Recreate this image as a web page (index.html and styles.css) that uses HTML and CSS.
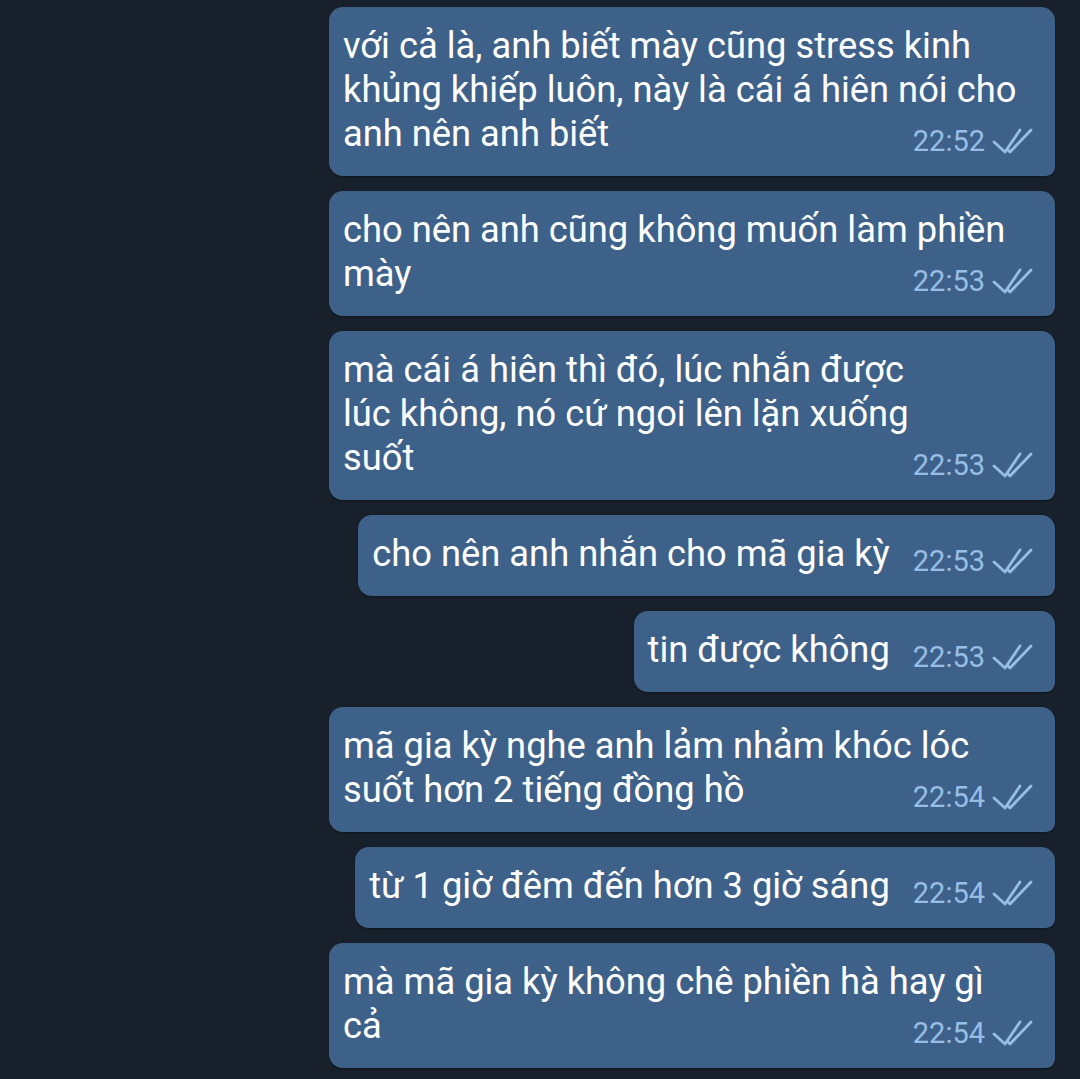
FILE: index.html
```html
<!DOCTYPE html>
<html lang="vi">
<head>
<meta charset="utf-8">
<title>Chat</title>
<link rel="stylesheet" href="styles.css">
</head>
<body>
<svg width="0" height="0" class="defs">
  <defs>
    <g id="dbl">
      <path d="M3 15 L14 25 L29 3" />
      <path d="M17 23 L19 25 L40 3" />
    </g>
  </defs>
</svg>
<main class="chat">
  <div class="bubble wide"><span class="text">với cả là, anh biết mày cũng stress kinh<br>khủng khiếp luôn, này là cái á hiên nói cho<br>anh nên anh biết</span><span class="meta"><span class="time">22:52</span><svg class="check" viewBox="0 0 42 28"><use href="#dbl"/></svg></span></div>
  <div class="bubble wide"><span class="text">cho nên anh cũng không muốn làm phiền<br>mày</span><span class="meta"><span class="time">22:53</span><svg class="check" viewBox="0 0 42 28"><use href="#dbl"/></svg></span></div>
  <div class="bubble wide"><span class="text">mà cái á hiên thì đó, lúc nhắn được<br>lúc không, nó cứ ngoi lên lặn xuống<br>suốt</span><span class="meta"><span class="time">22:53</span><svg class="check" viewBox="0 0 42 28"><use href="#dbl"/></svg></span></div>
  <div class="bubble"><span class="text">cho nên anh nhắn cho mã gia kỳ</span><span class="meta"><span class="time">22:53</span><svg class="check" viewBox="0 0 42 28"><use href="#dbl"/></svg></span></div>
  <div class="bubble"><span class="text">tin được không</span><span class="meta"><span class="time">22:53</span><svg class="check" viewBox="0 0 42 28"><use href="#dbl"/></svg></span></div>
  <div class="bubble wide"><span class="text">mã gia kỳ nghe anh lảm nhảm khóc lóc<br>suốt hơn 2 tiếng đồng hồ</span><span class="meta"><span class="time">22:54</span><svg class="check" viewBox="0 0 42 28"><use href="#dbl"/></svg></span></div>
  <div class="bubble"><span class="text">từ 1 giờ đêm đến hơn 3 giờ sáng</span><span class="meta"><span class="time">22:54</span><svg class="check" viewBox="0 0 42 28"><use href="#dbl"/></svg></span></div>
  <div class="bubble wide"><span class="text">mà mã gia kỳ không chê phiền hà hay gì<br>cả</span><span class="meta"><span class="time">22:54</span><svg class="check" viewBox="0 0 42 28"><use href="#dbl"/></svg></span></div>
</main>
</body>
</html>
```

FILE: styles.css
```css
html, body {
  margin: 0;
  padding: 0;
  background: #17202b;
}
body {
  width: 1080px;
  height: 1079px;
  overflow: hidden;
  font-family: Roboto, "Noto Sans", sans-serif;
}
.defs {
  position: absolute;
  width: 0;
  height: 0;
}
.chat {
  display: flex;
  flex-direction: column;
  align-items: flex-end;
  gap: 15px;
  padding: 7px 25px 0 0;
}
.bubble {
  display: flow-root;
  box-sizing: border-box;
  max-width: 726px;
  background: #3e6189;
  color: #ffffff;
  border-radius: 14px 14px 9px 14px;
  box-shadow: 0 1px 2px rgba(0, 0, 0, 0.35);
  padding: 17px 22px 13px 14px;
  font-size: 36.3px;
  line-height: 44px;
  white-space: nowrap;
}
.bubble.wide {
  width: 726px;
}
.meta {
  float: right;
  display: flex;
  align-items: center;
  gap: 6px;
  margin: 7px 0 0 23px;
  height: 44px;
  color: #97bfe6;
}
.time {
  font-size: 29px;
  line-height: 44px;
}
.check {
  width: 42px;
  height: 28px;
  fill: none;
  stroke: #97bfe6;
  stroke-width: 2.8;
  stroke-linecap: round;
  stroke-linejoin: round;
}
```
